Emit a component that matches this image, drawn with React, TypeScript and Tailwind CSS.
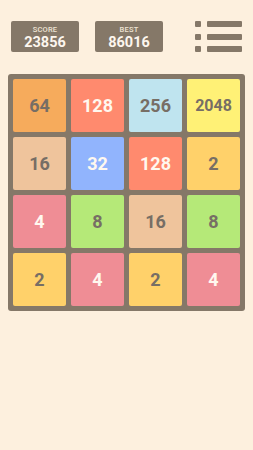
import React from "react";

type Tile = { v: number; bg: string; light: boolean };

const tiles: Tile[] = [
  { v: 64, bg: "bg-[#f6ab5c]", light: false },
  { v: 128, bg: "bg-[#ff8a6e]", light: true },
  { v: 256, bg: "bg-[#bfe4ef]", light: false },
  { v: 2048, bg: "bg-[#fff176]", light: false },
  { v: 16, bg: "bg-[#efc49c]", light: false },
  { v: 32, bg: "bg-[#91b4fd]", light: true },
  { v: 128, bg: "bg-[#ff8a6e]", light: true },
  { v: 2, bg: "bg-[#ffd16a]", light: false },
  { v: 4, bg: "bg-[#ef8d95]", light: true },
  { v: 8, bg: "bg-[#b5e978]", light: false },
  { v: 16, bg: "bg-[#efc49c]", light: false },
  { v: 8, bg: "bg-[#b5e978]", light: false },
  { v: 2, bg: "bg-[#ffd16a]", light: false },
  { v: 4, bg: "bg-[#ef8d95]", light: true },
  { v: 2, bg: "bg-[#ffd16a]", light: false },
  { v: 4, bg: "bg-[#ef8d95]", light: true },
];

function ScoreBox({ label, value }: { label: string; value: string }) {
  return (
    <div className="w-[68px] h-[31px] rounded-[2px] bg-[#857868] flex flex-col items-center pt-[5px]">
      <div className="text-[7.5px] leading-[8px] font-medium text-[#efe4d4] tracking-[0.2px]">{label}</div>
      <div className="text-[14.5px] leading-[16px] font-bold text-[#fdf6ee] mt-[1px]">{value}</div>
    </div>
  );
}

export default function App() {
  return (
    <div
      className="w-[253px] h-[450px] bg-[#fdf0de] overflow-hidden"
      style={{ fontFamily: "Roboto, 'Liberation Sans', sans-serif" }}
    >
      <div className="flex items-start pt-[21px] pl-[11px] pr-[11px]">
        <ScoreBox label="SCORE" value="23856" />
        <div className="ml-[16px]">
          <ScoreBox label="BEST" value="86016" />
        </div>
        <div className="ml-auto w-[47px] h-[31px] flex flex-col justify-between">
          {[0, 1, 2].map((i) => (
            <div key={i} className="flex gap-[6px] h-[6px]">
              <div className="w-[6px] h-[6px] rounded-[1px] bg-[#857868]" />
              <div className="flex-1 h-[6px] rounded-[1px] bg-[#857868]" />
            </div>
          ))}
        </div>
      </div>
      <div className="ml-[8px] mt-[22px] w-[237px] h-[237px] bg-[#857868] rounded-[3px] p-[5px] grid grid-cols-4 gap-[5px]">
        {tiles.map((t, i) => (
          <div
            key={i}
            className={`${t.bg} rounded-[2px] flex items-center justify-center font-bold ${
              t.light ? "text-[#fff8ef]" : "text-[#776e65]"
            } ${t.v >= 1000 ? "text-[16px]" : "text-[18px]"}`}
          >
            {t.v}
          </div>
        ))}
      </div>
    </div>
  );
}
